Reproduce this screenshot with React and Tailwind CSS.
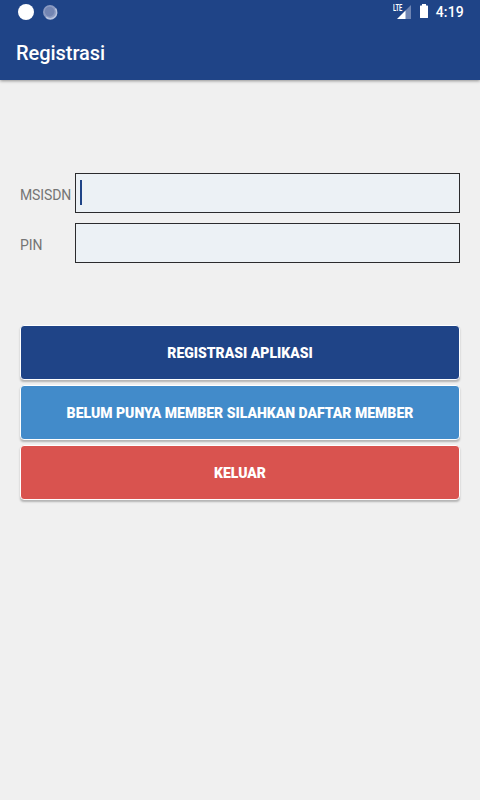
import React from 'react';

const StatusBar = () => (
  <div className="h-6 pl-[18px] pr-4 flex items-center justify-between text-white">
    <div className="flex items-center gap-2">
      <span className="w-4 h-4 rounded-full bg-white" />
      <svg width="16" height="16" viewBox="0 0 16 16">
        <circle cx="8" cy="8" r="7" fill="#8b9ac1" />
        <circle cx="7.6" cy="7.6" r="4.8" fill="#7385b2" />
        <path d="M4 13.2A6.4 6.4 0 0 0 13.4 4.6" fill="none" stroke="#b9c4de" strokeWidth="1.6" />
      </svg>
    </div>
    <div className="flex items-center">
      {/* Signal */}
      <div className="relative w-[19px] h-4">
        <svg className="absolute inset-0" width="19" height="16" viewBox="0 0 19 16">
          <path d="M18 1v14h-6V7z" fill="#6f85b3" />
          <path d="M12.5 6.5V15H4z" fill="#fff" />
        </svg>
        <span className="absolute left-0 top-0 text-[9px] leading-[8px] font-bold origin-left scale-x-[0.64]">LTE</span>
      </div>
      {/* Battery */}
      <svg className="ml-2" width="8" height="16" viewBox="0 0 8 16">
        <path d="M2 -0.5h4v2H7.4a.6.6 0 0 1 .6.6v11.3a.6.6 0 0 1-.6.6H.6a.6.6 0 0 1-.6-.6V2.1a.6.6 0 0 1 .6-.6H2z" fill="#fff" />
      </svg>
      <span className="ml-2 text-sm font-medium tracking-[0.2px]">4:19</span>
    </div>
  </div>
);

const Field = ({ label, focused }) => (
  <label className="flex items-center">
    <span className="w-[55px] pt-1 text-sm tracking-[-0.1px] text-[#757575]">{label}</span>
    <div className="flex-1 h-10 flex items-center pl-1 bg-[#ecf1f5] border border-[#2b2b2d]">
      {focused && <span className="w-0.5 h-[25px] -mt-px bg-[#1f4487]" />}
    </div>
  </label>
);

const Button = ({ children, className }) => (
  <button className={`w-full h-[55px] pt-px rounded border border-white text-white text-sm font-black shadow-[0_2px_2px_rgba(0,0,0,0.25)] ${className}`}>
    {children}
  </button>
);

const App = () => {
  return (
    <div className="min-h-screen bg-[#f0f0f0] font-['Roboto',sans-serif]">
      <header className="h-20 bg-[#1f4487] shadow-[0_1px_3px_rgba(0,0,0,0.4)]">
        <StatusBar />
        <h1 className="h-14 px-4 pt-0.5 flex items-center text-xl font-medium tracking-[-0.05px] text-white">Registrasi</h1>
      </header>

      <main className="px-5 pt-[93px]">
        <div className="flex flex-col gap-2.5">
          <Field label="MSISDN" focused />
          <Field label="PIN" />
        </div>

        <div className="mt-[62px] flex flex-col gap-[5px]">
          <Button className="bg-[#1f4487]">REGISTRASI APLIKASI</Button>
          <Button className="bg-[#428bca]">BELUM PUNYA MEMBER SILAHKAN DAFTAR MEMBER</Button>
          <Button className="bg-[#d9534f]">KELUAR</Button>
        </div>
      </main>
    </div>
  );
};

export default App;
